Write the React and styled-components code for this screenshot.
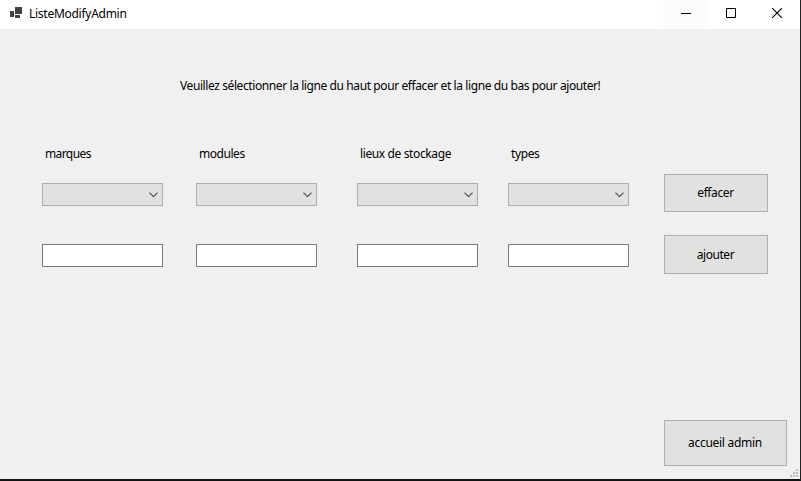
import React from "react";
import styled, { createGlobalStyle } from "styled-components";

const GlobalStyle = createGlobalStyle`
  * { box-sizing: border-box; }
  body {
    margin: 0;
    overflow: hidden;
    background: #141214;
    font-family: "Noto Sans", "Open Sans", sans-serif;
    font-size: 12px;
    color: #000;
  }
`;

const Window = styled.main`
  display: flex;
  flex-direction: column;
  width: 801px;
  height: 481px;
  border-right: 1px solid #232023;
  border-bottom: 2px solid #141214;
  background: #f0f0f0;
`;

const TitleBar = styled.header`
  display: flex;
  flex: none;
  height: 29px;
  background: #fff;
`;

const AppIcon = styled.svg`
  flex: none;
  width: 12px;
  height: 12px;
  margin: 7px 7px 0 10px;
`;

const Text = styled.span`
  display: block;
  width: max-content;
  line-height: 16px;
  white-space: nowrap;
  letter-spacing: ${(p) => p.$spacing ?? 0}px;
`;

const Title = styled(Text)`
  margin-top: 6px;
`;

const Controls = styled.div`
  display: flex;
  margin-left: auto;
`;

const ControlButton = styled.button`
  display: flex;
  align-items: flex-start;
  justify-content: center;
  width: ${(p) => p.$width}px;
  height: ${(p) => (p.$shaded ? 28 : 29)}px;
  padding: 8px 0 0;
  border: 0;
  background: ${(p) => (p.$shaded ? "#fcfcfc" : "#fff")};
`;

const Form = styled.section`
  display: flex;
  flex: 1;
  flex-direction: column;
  min-height: 0;
`;

const Message = styled(Text)`
  margin: 49px 0 0 180px;
`;

const Fields = styled.div`
  display: grid;
  grid-template-columns: 154px 161px 151px 156px 104px;
  margin: 52px 0 0 42px;
`;

const Field = styled.div`
  display: flex;
  flex-direction: column;
  width: 121px;
`;

const Label = styled(Text)`
  margin: 0 0 21px 3px;
`;

const Combo = styled.button`
  display: flex;
  align-items: center;
  justify-content: flex-end;
  height: 23px;
  padding: 0 4px 0 0;
  border: 1px solid #adadad;
  background: #e1e1e1;
`;

const TextBox = styled.input`
  width: 121px;
  height: 23px;
  margin-top: 38px;
  padding: 0 3px;
  border: 1px solid #7a7a7a;
  background: #fff;
  font: inherit;
  outline: 0;
`;

const Actions = styled.div`
  display: flex;
  flex-direction: column;
  gap: 23px;
  padding-top: 28px;
`;

const Button = styled.button`
  display: flex;
  align-items: center;
  justify-content: center;
  width: ${(p) => p.$width}px;
  height: ${(p) => p.$height}px;
  padding: 0 1px 0 0;
  border: 1px solid #adadad;
  background: #e1e1e1;
  font: inherit;
  color: #000;
`;

const Footer = styled.footer`
  display: flex;
  align-items: flex-end;
  justify-content: flex-end;
  gap: 3px;
  margin-top: auto;
  padding: 0 2px 2px 0;
`;

const HomeSlot = styled.div`
  padding-bottom: 11px;
`;

const Grip = styled.svg`
  width: 8px;
  height: 8px;
`;

const fields = [
  { label: "marques", spacing: -0.6 },
  { label: "modules", spacing: -0.45 },
  { label: "lieux de stockage", spacing: -0.38 },
  { label: "types", spacing: -0.4 },
];

function Chevron() {
  return (
    <svg width="9" height="6" viewBox="0 0 9 6" fill="none" stroke="#505050" strokeWidth="1.2">
      <path d="M.5 .7 4.5 4.7 8.5 .7" />
    </svg>
  );
}

export default function App() {
  return (
    <>
      <GlobalStyle />
      <Window>
        <TitleBar>
          <AppIcon viewBox="0 0 12 12" fill="#414141" shapeRendering="crispEdges">
            <path d="M5 0h7v7H5zM0 4h4v6H0zM5 8h5v3H5z" />
          </AppIcon>
          <Title $spacing={-0.27}>ListeModifyAdmin</Title>
          <Controls>
            <ControlButton $width={45} $shaded aria-label="Minimize">
              <svg width="10" height="11" shapeRendering="crispEdges">
                <path d="M0 5h10v1H0z" />
              </svg>
            </ControlButton>
            <ControlButton $width={46} aria-label="Maximize">
              <svg width="10" height="10" fill="none" stroke="#000">
                <path d="M.5 .5h9v9h-9z" />
              </svg>
            </ControlButton>
            <ControlButton $width={46} aria-label="Close">
              <svg width="10" height="10" fill="none" stroke="#000" strokeWidth="1.1">
                <path d="M0 0 10 10M10 0 0 10" />
              </svg>
            </ControlButton>
          </Controls>
        </TitleBar>
        <Form>
          <Message $spacing={-0.405}>
            Veuillez sélectionner la ligne du haut pour effacer et la ligne du bas pour ajouter!
          </Message>
          <Fields>
            {fields.map(({ label, spacing }) => (
              <Field key={label}>
                <Label $spacing={spacing}>{label}</Label>
                <Combo aria-label={label}>
                  <Chevron />
                </Combo>
                <TextBox aria-label={label} />
              </Field>
            ))}
            <Actions>
              <Button $width={104} $height={38}><Text $spacing={-0.4}>effacer</Text></Button>
              <Button $width={104} $height={39}><Text $spacing={-0.45}>ajouter</Text></Button>
            </Actions>
          </Fields>
          <Footer>
            <HomeSlot>
              <Button $width={123} $height={46}><Text $spacing={-0.28}>accueil admin</Text></Button>
            </HomeSlot>
            <Grip viewBox="0 0 8 8" fill="#bfbfbf" shapeRendering="crispEdges">
              <path d="M6 0h2v2H6zM3 3h2v2H3zM6 3h2v2H6zM0 6h2v2H0zM3 6h2v2H3zM6 6h2v2H6z" />
            </Grip>
          </Footer>
        </Form>
      </Window>
    </>
  );
}
